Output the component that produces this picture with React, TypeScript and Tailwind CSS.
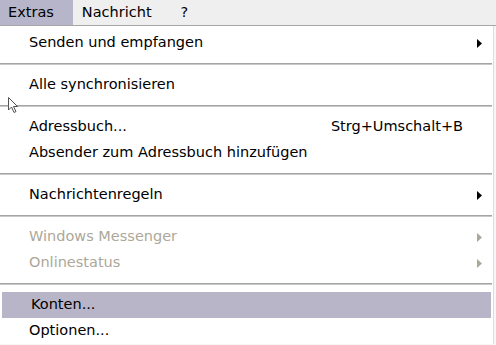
import React from "react";

type Item = {
  label?: string;
  shortcut?: string;
  sub?: boolean;
  disabled?: boolean;
  active?: boolean;
  sep?: boolean;
};

const items: Item[] = [
  { label: "Senden und empfangen", sub: true },
  { sep: true },
  { label: "Alle synchronisieren" },
  { sep: true },
  { label: "Adressbuch...", shortcut: "Strg+Umschalt+B" },
  { label: "Absender zum Adressbuch hinzufügen" },
  { sep: true },
  { label: "Nachrichtenregeln", sub: true },
  { sep: true },
  { label: "Windows Messenger", sub: true, disabled: true },
  { label: "Onlinestatus", sub: true, disabled: true },
  { sep: true },
  { label: "Konten...", active: true },
  { label: "Optionen..." },
];

function Arrow({ disabled }: { disabled?: boolean }) {
  return (
    <svg width="7" height="11" viewBox="0 0 7 11" className="shrink-0">
      <path d="M1 1 L6 5.5 L1 10 Z" fill={disabled ? "#aca899" : "#000"} />
    </svg>
  );
}

export default function App() {
  return (
    <div
      className="relative w-[496px] h-[345px] bg-[#f7f7f9] overflow-hidden text-[14.5px] text-black"
      style={{ fontFamily: '"DejaVu Sans", Verdana, sans-serif' }}
    >
      <div className="flex items-center h-[26px] bg-[#efefef] border-b border-[#a6a6a6]">
        <div className="h-full flex items-center pl-[8px] pr-[19px] bg-[#b7b5c9]">Extras</div>
        <div className="h-full flex items-center ml-[9px]">Nachricht</div>
        <div className="h-full flex items-center ml-[29px]">?</div>
      </div>

      <div className="w-[494px] h-[318px] bg-white border-r border-[#dcdcdc] pt-[4px]">
        {items.map((it, i) =>
          it.sep ? (
            <div key={i} className="h-[16px] flex items-center">
              <div className="w-[492px] h-[2px] bg-[#a5a5a5] border-b border-[#c8c8c8]" />
            </div>
          ) : (
            <div
              key={i}
              className={
                "h-[26px] flex items-center pl-[29px] pr-[10px] " +
                (it.active ? "bg-[#b8b5c8] mx-[2px] pl-[27px] " : "") +
                (it.disabled ? "text-[#aca899]" : "")
              }
            >
              <span className="flex-1">{it.label}</span>
              {it.shortcut && <span className="mr-[20px]">{it.shortcut}</span>}
              {it.sub && <Arrow disabled={it.disabled} />}
            </div>
          )
        )}
      </div>

      {/* mouse pointer */}
      <svg
        className="absolute left-[4px] top-[96px]"
        width="16"
        height="20"
        viewBox="0 0 16 20"
      >
        <path
          d="M4.5 1.5 L4.5 14 L7.5 11 L10 16.5 L12 15.5 L9.5 10.5 L13.5 10.5 Z"
          fill="white"
          stroke="#555"
          strokeWidth="1"
        />
      </svg>
    </div>
  );
}
